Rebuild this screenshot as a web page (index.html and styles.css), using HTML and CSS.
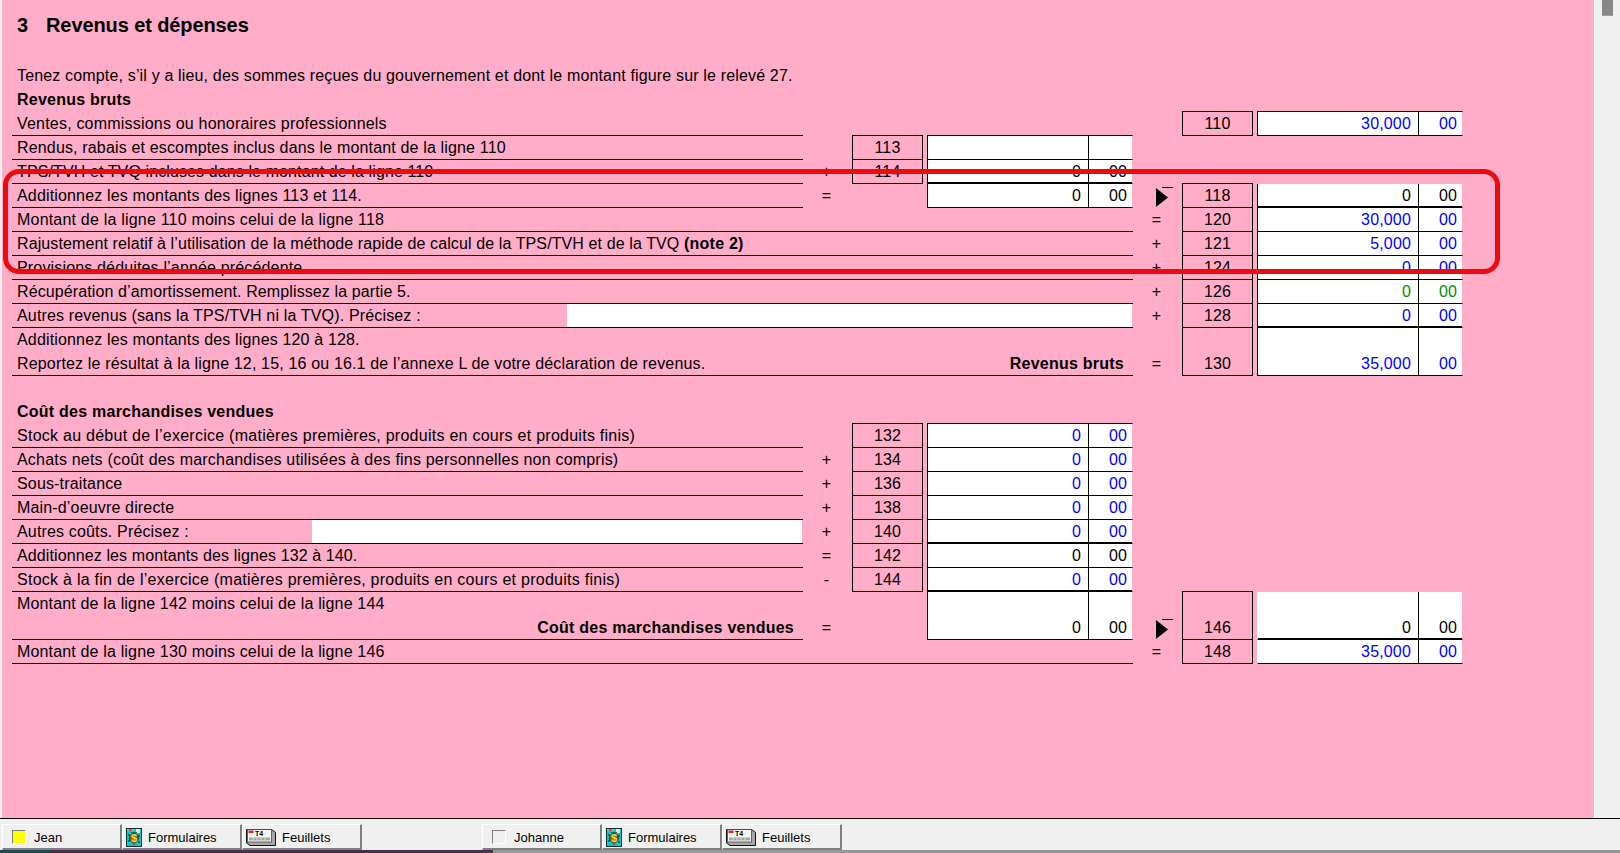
FILE: index.html
```html
<!DOCTYPE html>
<html lang="fr">
<head>
<meta charset="utf-8">
<title>Revenus et dépenses</title>
<link rel="stylesheet" href="styles.css">
</head>
<body>
<div class="workspace">
  <main class="sheet">
    <h1 class="title"><span>3</span><span>Revenus et dépenses</span></h1>
    <p class="intro">Tenez compte, s’il y a lieu, des sommes reçues du gouvernement et dont le montant figure sur le relevé 27.</p>
    <p class="heading">Revenus bruts</p>
    <div class="form">
      <div class="row">
        <div class="lab ls-plus">Ventes, commissions ou honoraires professionnels</div>
        <div class="box b2 first">110</div>
        <div class="int i2 first blue">30,000</div><div class="cts c2 first blue">00</div>
      </div>
      <div class="row">
        <div class="lab">Rendus, rabais et escomptes inclus dans le montant de la ligne 110</div>
        <div class="box b1 first">113</div>
        <div class="int i1 first"></div><div class="cts c1 first"></div>
      </div>
      <div class="row">
        <div class="lab ls-narrow">TPS/TVH et TVQ incluses dans le montant de la ligne 110</div>
        <div class="op o1">+</div>
        <div class="box b1">114</div>
        <div class="int i1 thick">0</div><div class="cts c1 thick">00</div>
      </div>
      <div class="row">
        <div class="lab">Additionnez les montants des lignes 113 et 114.</div>
        <div class="op o1">=</div>
        <div class="int i1">0</div><div class="cts c1">00</div>
        <div class="op o2 arrow"><svg class="arrow-icon" width="18" height="20" viewBox="0 0 18 20"><path d="M0 1L12 10.5L0 20Z"/><path d="M6 .5H17" stroke="#000" fill="none"/></svg></div>
        <div class="box b2 first">118</div>
        <div class="int i2 thick">0</div><div class="cts c2 thick">00</div>
      </div>
      <div class="row">
        <div class="lab wide ls-plus">Montant de la ligne 110 moins celui de la ligne 118</div>
        <div class="op o2">=</div>
        <div class="box b2">120</div>
        <div class="int i2 blue">30,000</div><div class="cts c2 blue">00</div>
      </div>
      <div class="row">
        <div class="lab wide ls-narrow"><span>Rajustement relatif à l’utilisation de la méthode rapide de calcul de la TPS/TVH et de la TVQ <b>(note 2)</b></span></div>
        <div class="op o2">+</div>
        <div class="box b2">121</div>
        <div class="int i2 blue">5,000</div><div class="cts c2 blue">00</div>
      </div>
      <div class="row">
        <div class="lab wide">Provisions déduites l’année précédente</div>
        <div class="op o2">+</div>
        <div class="box b2">124</div>
        <div class="int i2 blue">0</div><div class="cts c2 blue">00</div>
      </div>
      <div class="row">
        <div class="lab wide ls-narrow">Récupération d’amortissement. Remplissez la partie 5.</div>
        <div class="op o2">+</div>
        <div class="box b2">126</div>
        <div class="int i2 green">0</div><div class="cts c2 green">00</div>
      </div>
      <div class="row">
        <div class="lab wide split"><span>Autres revenus (sans la TPS/TVH ni la TVQ). Précisez :</span><span class="fill fill-long"></span></div>
        <div class="op o2">+</div>
        <div class="box b2">128</div>
        <div class="int i2 blue thick">0</div><div class="cts c2 blue thick">00</div>
      </div>
      <div class="row tall">
        <div class="lab wide stack">
          <div>Additionnez les montants des lignes 120 à 128.</div>
          <div class="split"><span>Reportez le résultat à la ligne 12, 15, 16 ou 16.1 de l’annexe L de votre déclaration de revenus.</span><b class="total">Revenus bruts</b></div>
        </div>
        <div class="op o2">=</div>
        <div class="box b2">130</div>
        <div class="int i2 blue">35,000</div><div class="cts c2 blue">00</div>
      </div>
    </div>
    <p class="heading heading-gap">Coût des marchandises vendues</p>
    <div class="form">
      <div class="row">
        <div class="lab ls-wide">Stock au début de l’exercice (matières premières, produits en cours et produits finis)</div>
        <div class="box b1 first">132</div>
        <div class="int i1 first blue">0</div><div class="cts c1 first blue">00</div>
      </div>
      <div class="row">
        <div class="lab ls-plus">Achats nets (coût des marchandises utilisées à des fins personnelles non compris)</div>
        <div class="op o1">+</div>
        <div class="box b1">134</div>
        <div class="int i1 blue">0</div><div class="cts c1 blue">00</div>
      </div>
      <div class="row">
        <div class="lab">Sous-traitance</div>
        <div class="op o1">+</div>
        <div class="box b1">136</div>
        <div class="int i1 blue">0</div><div class="cts c1 blue">00</div>
      </div>
      <div class="row">
        <div class="lab">Main-d’oeuvre directe</div>
        <div class="op o1">+</div>
        <div class="box b1">138</div>
        <div class="int i1 blue">0</div><div class="cts c1 blue">00</div>
      </div>
      <div class="row">
        <div class="lab split"><span>Autres coûts. Précisez :</span><span class="fill fill-short"></span></div>
        <div class="op o1">+</div>
        <div class="box b1">140</div>
        <div class="int i1 blue thick">0</div><div class="cts c1 blue thick">00</div>
      </div>
      <div class="row">
        <div class="lab ls-narrow">Additionnez les montants des lignes 132 à 140.</div>
        <div class="op o1">=</div>
        <div class="box b1">142</div>
        <div class="int i1">0</div><div class="cts c1">00</div>
      </div>
      <div class="row">
        <div class="lab ls-wide">Stock à la fin de l’exercice (matières premières, produits en cours et produits finis)</div>
        <div class="op o1">-</div>
        <div class="box b1">144</div>
        <div class="int i1 blue thick">0</div><div class="cts c1 blue thick">00</div>
      </div>
      <div class="row tall">
        <div class="lab stack">
          <div>Montant de la ligne 142 moins celui de la ligne 144</div>
          <div class="split"><span></span><b class="total">Coût des marchandises vendues</b></div>
        </div>
        <div class="op o1">=</div>
        <div class="int i1">0</div><div class="cts c1">00</div>
        <div class="op o2 arrow"><svg class="arrow-icon" width="18" height="20" viewBox="0 0 18 20"><path d="M0 1L12 10.5L0 20Z"/><path d="M6 .5H17" stroke="#000" fill="none"/></svg></div>
        <div class="box b2 first">146</div>
        <div class="int i2 thick open-left">0</div><div class="cts c2 thick">00</div>
      </div>
      <div class="row">
        <div class="lab wide">Montant de la ligne 130 moins celui de la ligne 146</div>
        <div class="op o2">=</div>
        <div class="box b2">148</div>
        <div class="int i2 blue open-left">35,000</div><div class="cts c2 blue">00</div>
      </div>
    </div>
    <div class="callout"></div>
  </main>
  <aside class="scrollbar"><div class="thumb"></div></aside>
</div>
<footer class="tabbar">
  <div class="group">
    <div class="tab"><span class="swatch swatch-on"></span><span>Jean</span></div>
    <div class="tab tab-icon">
      <svg width="16" height="19" viewBox="0 0 16 19"><rect x=".5" y=".5" width="15" height="18" fill="#10c4c8" stroke="#06343a"/><path d="M1 1h7v2H1z" fill="#8fb8bc"/><path d="M3 1h3v2H3z" fill="#d84f4f"/><path d="M10 1h4v4h-4z" fill="#dfe8e8"/><path d="M2 6h2v2H2zM12 7h2v2h-2zM2 12h2v2H2zM12 13h2v2h-2zM5 4h6v1H5z" fill="#0b6a72"/><circle cx="8" cy="10" r="4.500" fill="#7a6a20" stroke="#123c44"/><path d="M6 15h4l-2 3z" fill="#e0402a"/><text x="8" y="14" class="ic-dollar">$</text></svg>
      <span>Formulaires</span>
    </div>
    <div class="tab tab-icon">
      <svg width="30" height="19" viewBox="0 0 30 19"><path d="M.5 1.500H25.500L29.500 4.500V17.500H4L.5 15Z" fill="#a8a8a8" stroke="#111"/><rect x="1.500" y="1.500" width="24" height="12.500" fill="#f6f6f6" stroke="#333" stroke-width=".7"/><rect x="2.500" y="2.500" width="5" height="2.500" fill="#ee1c25"/><text x="9" y="8" class="ic-t4-text">T4</text><path d="M3 9.500h21v3H3z" fill="#a4a4a4"/><path d="M7 9.500v3M11 9.500v3M15 9.500v3M19 9.500v3" stroke="#e8e8e8" stroke-width=".8"/></svg>
      <span>Feuillets</span>
    </div>
  </div>
  <div class="group">
    <div class="tab"><span class="swatch"></span><span>Johanne</span></div>
    <div class="tab tab-icon">
      <svg width="16" height="19" viewBox="0 0 16 19"><rect x=".5" y=".5" width="15" height="18" fill="#10c4c8" stroke="#06343a"/><path d="M1 1h7v2H1z" fill="#8fb8bc"/><path d="M3 1h3v2H3z" fill="#d84f4f"/><path d="M10 1h4v4h-4z" fill="#dfe8e8"/><path d="M2 6h2v2H2zM12 7h2v2h-2zM2 12h2v2H2zM12 13h2v2h-2zM5 4h6v1H5z" fill="#0b6a72"/><circle cx="8" cy="10" r="4.500" fill="#7a6a20" stroke="#123c44"/><path d="M6 15h4l-2 3z" fill="#e0402a"/><text x="8" y="14" class="ic-dollar">$</text></svg>
      <span>Formulaires</span>
    </div>
    <div class="tab tab-icon">
      <svg width="30" height="19" viewBox="0 0 30 19"><path d="M.5 1.500H25.500L29.500 4.500V17.500H4L.5 15Z" fill="#a8a8a8" stroke="#111"/><rect x="1.500" y="1.500" width="24" height="12.500" fill="#f6f6f6" stroke="#333" stroke-width=".7"/><rect x="2.500" y="2.500" width="5" height="2.500" fill="#ee1c25"/><text x="9" y="8" class="ic-t4-text">T4</text><path d="M3 9.500h21v3H3z" fill="#a4a4a4"/><path d="M7 9.500v3M11 9.500v3M15 9.500v3M19 9.500v3" stroke="#e8e8e8" stroke-width=".8"/></svg>
      <span>Feuillets</span>
    </div>
  </div>
</footer>
<div class="desktop"></div>
</body>
</html>
```

FILE: styles.css
```css
* { box-sizing: border-box; }
html, body { margin: 0; height: 100%; }
body {
  width: 1620px;
  height: 853px;
  overflow: hidden;
  display: flex;
  flex-direction: column;
  background: #f0f0f0;
  font-family: "Liberation Sans", Arial, sans-serif;
  font-size: 16px;
  color: #000;
}
.workspace {
  height: 819px;
  display: flex;
  padding-left: 2px;
  border-bottom: 1px solid #000;
}
.sheet {
  position: relative;
  width: 1592px;
  padding: 13px 0 0 10px;
  background: #ffadc8;
  letter-spacing: .16px;
}
.sheet b, .heading { letter-spacing: .24px; }
.ls-wide { letter-spacing: .26px; }
.ls-plus { letter-spacing: .2px; }
.ls-narrow { letter-spacing: .11px; }
.scrollbar {
  width: 26px;
  border-left: 1px solid #fff;
  padding-left: 7px;
}
.thumb { width: 11px; height: 16px; background: #878787; border-bottom: 1px solid #9c9c9c; }

.title {
  margin: 0 0 27px 5px;
  height: 24px;
  display: flex;
  gap: 18px;
  font-size: 20px;
  line-height: 24px;
  font-weight: bold;
  letter-spacing: -.1px;
}
.intro, .heading {
  margin: 0 0 0 5px;
  height: 24px;
  line-height: 24px;
}
.heading { font-weight: bold; }
.heading-gap { margin-top: 24px; }

.row {
  display: grid;
  grid-template-columns: 791px 49px 71px 4px 162px 44px 49px 71px 4px 162px 44px;
  grid-template-rows: minmax(0, 1fr);
  height: 24px;
  line-height: 23px;
}
.tall { height: 48px; }
.lab {
  grid-column: 1;
  padding-left: 5px;
  border-bottom: 1px solid #000;
}
.wide { grid-column: 1 / 7; }
.split { display: flex; justify-content: space-between; }
.stack div { height: 24px; }
.stack div + div { height: 23px; }
.total { padding-right: 9px; }
.fill { display: block; background: #fff; height: 23px; margin-right: 1px; }
.fill-long { width: 565px; }
.fill-short { width: 490px; }

.op { text-align: center; align-self: end; height: 24px; padding-right: 2px; }
.o1 { grid-column: 2; }
.o2 { grid-column: 7; }
.arrow { position: relative; }
.arrow-icon { position: absolute; left: 23px; top: 3px; fill: #000; }

.box {
  border: 1px solid #000;
  border-top: 0;
  display: flex;
  align-items: flex-end;
  justify-content: center;
}
.b1 { grid-column: 3; }
.b2 { grid-column: 8; }

.int, .cts {
  display: flex;
  align-items: flex-end;
  justify-content: flex-end;
  background: #fff;
  border-bottom: 1px solid #000;
}
.int {
  border-left: 1px solid #000;
  border-right: 1px solid #000;
  padding-right: 7px;
}
.cts {
  background-clip: padding-box;
  padding-right: 5px;
  border-right: 1px solid transparent;
}
.i1 { grid-column: 5; }
.c1 { grid-column: 6; }
.i2 { grid-column: 10; }
.c2 { grid-column: 11; }
.first { border-top: 1px solid #000; margin-top: -1px; }
.thick { box-shadow: inset 0 -1px #000; }
.open-left { border-left-color: #fff; }
.blue { color: #0000ff; }
.green { color: #008c00; }

.callout {
  position: absolute;
  left: 1px;
  top: 169px;
  width: 1497px;
  height: 105px;
  border: 5px solid #ec0b0d;
  border-radius: 16px;
}

.tabbar {
  height: 31px;
  padding: 5px 0 0 2px;
  display: flex;
  gap: 120px;
  background: #f0f0f0;
  border-bottom-left-radius: 8px;
  position: relative;
  z-index: 1;
  font-size: 13px;
}
.group { display: flex; }
.tab {
  width: 120px;
  height: 26px;
  display: flex;
  align-items: center;
  padding: 1px 0 0 9px;
  gap: 8px;
  border-style: solid;
  border-color: #fff #808080 #808080 #fff;
  border-width: 1px 2px 2px 1px;
}
.tab-icon { padding-left: 3px; gap: 6px; }
.swatch {
  width: 14px;
  height: 14px;
  background: #f0f0f0;
  border: 1px solid;
  border-color: #808080 #fff #fff #808080;
}
.swatch-on { background: #ffff00; }
.ic-dollar { font: bold 11px "Liberation Sans", sans-serif; fill: #ffd21a; text-anchor: middle; }
.ic-t4-text { font: bold 7px "Liberation Sans", sans-serif; fill: #000; }
.desktop {
  height: 3px;
  margin-top: auto;
  background: linear-gradient(90deg, #1f4a55 0 50px, #4a2f4f 50px 493px, #989898 493px);
}
```
